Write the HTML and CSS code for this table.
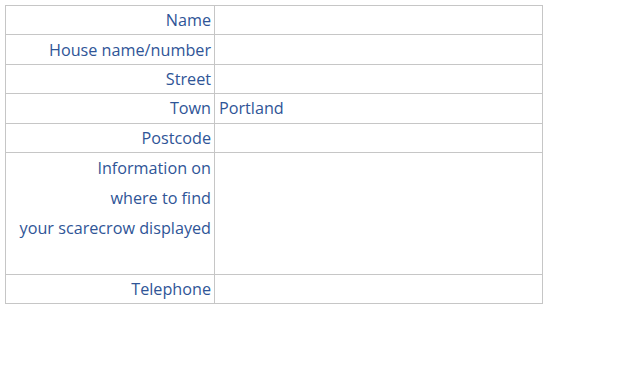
FILE: index.html
```html
<!DOCTYPE html>
<html lang="en">
  <head>
    <meta charset="UTF-8" />
    <meta name="viewport" content="width=device-width, initial-scale=1" />
    <title>Scarecrow entry</title>
    <link rel="stylesheet" href="styles.css">
  </head>
  <body>
    <!-- Kontaktdaten zur Vogelscheuche -->
    <table class="entry">
      <tr>
        <td class="label">Name</td>
        <td class="value"></td>
      </tr>
      <tr>
        <td class="label">House name/number</td>
        <td class="value"></td>
      </tr>
      <tr>
        <td class="label">Street</td>
        <td class="value"></td>
      </tr>
      <tr>
        <td class="label">Town</td>
        <td class="value">Portland</td>
      </tr>
      <tr>
        <td class="label">Postcode</td>
        <td class="value"></td>
      </tr>
      <tr class="tall">
        <td class="label">Information on<br>where to find<br>your scarecrow displayed<br>&nbsp;</td>
        <td class="value"></td>
      </tr>
      <tr class="last">
        <td class="label">Telephone</td>
        <td class="value"></td>
      </tr>
    </table>
  </body>
</html>
```

FILE: styles.css
```css
body {
  font-family: "Open Sans", Arial, sans-serif;
  font-size: 16.2px;
  margin: 5px;
  background: #ffffff;
  color: #2f5597;
}
table.entry {
  border-collapse: collapse;
  width: 538px;
}
td {
  border: 1px solid #c6c6c6;
  padding: 0;
  height: 28.4px;
  line-height: 20px;
  vertical-align: middle;
}
td.label {
  width: 205px;
  text-align: right;
  padding-right: 3px;
}
td.value {
  padding-left: 4px;
}
tr.tall td {
  height: 120px;
  line-height: 30.2px;
  vertical-align: top;
}
tr.last td {
  height: 28px;
}
```
